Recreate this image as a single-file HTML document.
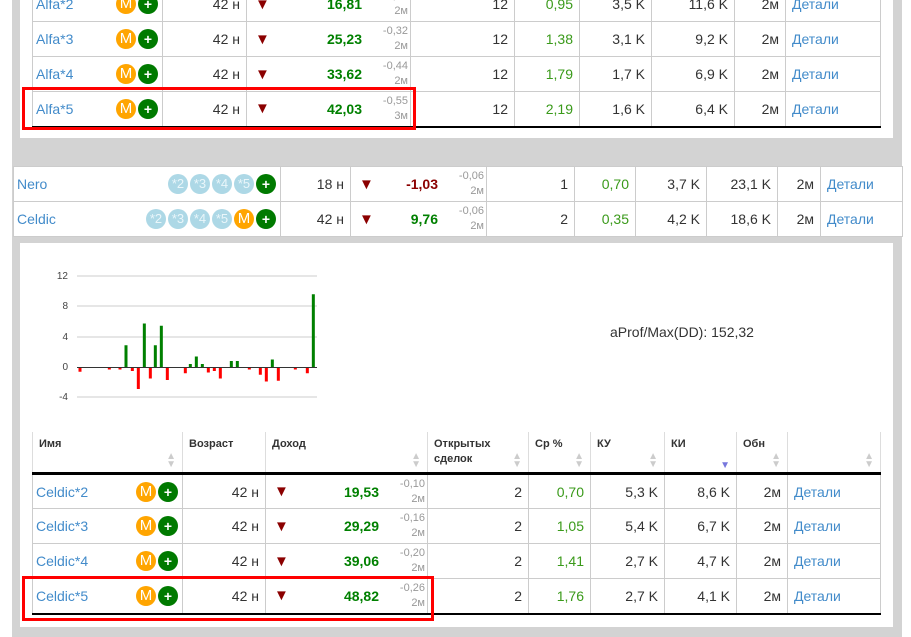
<!DOCTYPE html>
<html><head><meta charset="utf-8"><style>
*{box-sizing:border-box;margin:0;padding:0}
body{width:911px;height:637px;overflow:hidden;background:#fff;font-family:"Liberation Sans",sans-serif;font-size:14px;color:#333;position:relative}
.abs{position:absolute}
table{border-collapse:collapse;table-layout:fixed;position:absolute}
td{border:1px solid #ccc;height:35px;padding:0 6px;vertical-align:middle;white-space:nowrap;text-align:right}
a{color:#428bca;text-decoration:none}
.nm{text-align:left;padding-left:3px;padding-right:4px}
.nm a{float:left;line-height:20px}
.bd{float:right;display:flex;gap:2px}
.b{width:20px;height:20px;border-radius:50%;color:#fff;text-align:center;line-height:20px;font-size:14px}
.o{background:#ffa500;font-size:15px}
.g{background:#007a00;font-weight:bold}
.l{background:#add8e6;font-size:13px;color:#eaf6fa}
.inc{padding:0 2px 0 8px}
.inc>div{display:flex;align-items:center}
.tri{color:#8b0000;font-size:15px;width:20px;text-align:left}
.v{flex:1;text-align:right;font-weight:bold;color:#008000}
.s{width:46px;text-align:right;font-size:11px;color:#999;line-height:15px}
.cp{color:#3a9a1a}
.det{text-align:left}
th{font-size:11px;font-weight:bold;text-align:left;vertical-align:top;padding:5px 6px;border-left:1px solid #ddd;border-right:1px solid #ddd;height:41px;position:relative;line-height:15px;color:#333}
.ar{position:absolute;right:6px;bottom:3px;color:#ccc;font-size:10px;line-height:8px;text-align:center}
.red{position:absolute;border:3px solid #f00}
</style></head><body>
<div class="abs" style="left:12px;top:0;width:890px;height:637px;background:#d3d3d3"></div>
<div class="abs" style="left:20px;top:0;width:873px;height:138px;background:#fff"></div>
<div class="abs" style="left:20px;top:243px;width:873px;height:384px;background:#fff"></div>

<table style="left:32px;top:-14px;width:848px;border-bottom:2px solid #000">
<colgroup><col style="width:130px"><col style="width:84px"><col style="width:164px"><col style="width:104px"><col style="width:65px"><col style="width:72px"><col style="width:83px"><col style="width:51px"><col style="width:95px"></colgroup>
<tr><td class="nm"><a>Alfa*2</a><span class="bd"><span class="b o">M</span><span class="b g">+</span></span></td><td>42 н</td><td class="inc"><div><span class="tri">▼</span><span class="v">16,81</span><span class="s">-0,19<br>2м</span></div></td><td>12</td><td class="cp">0,95</td><td>3,5 K</td><td>11,6 K</td><td>2м</td><td class="det"><a>Детали</a></td></tr>
<tr><td class="nm"><a>Alfa*3</a><span class="bd"><span class="b o">M</span><span class="b g">+</span></span></td><td>42 н</td><td class="inc"><div><span class="tri">▼</span><span class="v">25,23</span><span class="s">-0,32<br>2м</span></div></td><td>12</td><td class="cp">1,38</td><td>3,1 K</td><td>9,2 K</td><td>2м</td><td class="det"><a>Детали</a></td></tr>
<tr><td class="nm"><a>Alfa*4</a><span class="bd"><span class="b o">M</span><span class="b g">+</span></span></td><td>42 н</td><td class="inc"><div><span class="tri">▼</span><span class="v">33,62</span><span class="s">-0,44<br>2м</span></div></td><td>12</td><td class="cp">1,79</td><td>1,7 K</td><td>6,9 K</td><td>2м</td><td class="det"><a>Детали</a></td></tr>
<tr><td class="nm"><a>Alfa*5</a><span class="bd"><span class="b o">M</span><span class="b g">+</span></span></td><td>42 н</td><td class="inc"><div><span class="tri">▼</span><span class="v">42,03</span><span class="s">-0,55<br>3м</span></div></td><td>12</td><td class="cp">2,19</td><td>1,6 K</td><td>6,4 K</td><td>2м</td><td class="det"><a>Детали</a></td></tr>
</table>
<div class="red" style="left:22px;top:87px;width:394px;height:43px"></div>

<table style="left:13px;top:166px;width:889px;background:#fff">
<colgroup><col style="width:267px"><col style="width:70px"><col style="width:136px"><col style="width:88px"><col style="width:61px"><col style="width:71px"><col style="width:71px"><col style="width:43px"><col style="width:82px"></colgroup>
<tr><td class="nm"><a>Nero</a><span class="bd"><span class="b l">*2</span><span class="b l">*3</span><span class="b l">*4</span><span class="b l">*5</span><span class="b g">+</span></span></td><td>18 н</td><td class="inc"><div><span class="tri">▼</span><span class="v" style="color:#8b0000">-1,03</span><span class="s">-0,06<br>2м</span></div></td><td>1</td><td class="cp">0,70</td><td>3,7 K</td><td>23,1 K</td><td>2м</td><td class="det"><a>Детали</a></td></tr>
<tr><td class="nm"><a>Celdic</a><span class="bd"><span class="b l">*2</span><span class="b l">*3</span><span class="b l">*4</span><span class="b l">*5</span><span class="b o">M</span><span class="b g">+</span></span></td><td>42 н</td><td class="inc"><div><span class="tri">▼</span><span class="v">9,76</span><span class="s">-0,06<br>2м</span></div></td><td>2</td><td class="cp">0,35</td><td>4,2 K</td><td>18,6 K</td><td>2м</td><td class="det"><a>Детали</a></td></tr>
</table>

<svg class="abs" style="left:30px;top:260px" width="300" height="150" font-family="Liberation Sans" font-size="10" fill="#444">
<g stroke="#ccc" stroke-width="1"><line x1="47" y1="16" x2="287" y2="16"/><line x1="47" y1="46" x2="287" y2="46"/><line x1="47" y1="77" x2="287" y2="77"/><line x1="47" y1="137" x2="287" y2="137"/></g>
<text x="38" y="19" text-anchor="end">12</text><text x="38" y="49" text-anchor="end">8</text><text x="38" y="80" text-anchor="end">4</text><text x="38" y="110" text-anchor="end">0</text><text x="38" y="140" text-anchor="end">-4</text>
<g id="bars"></g>
<line x1="47" y1="107.5" x2="287" y2="107.5" stroke="#333" stroke-width="1"/>
</svg>
<script>
var d=[[150,-0.5],[238,-0.2],[270,-0.2],[288,2.9],[307,-0.4],[325,-2.8],[343,5.8],[361,-1.4],[376,2.9],[394,5.5],[412,-1.6],[466,-0.7],[481,0.4],[499,1.4],[517,0.4],[535,-0.6],[553,-0.4],[571,-1.4],[604,0.8],[622,0.8],[658,-0.2],[691,-0.9],[709,-1.8],[727,1.0],[745,-1.7],[796,-0.2],[832,-0.7],[850,9.7]];
var s='';d.forEach(function(b){var x=b[0]/3-1.5,h=Math.abs(b[1])*7.5;if(b[1]>0)s+='<rect x="'+x+'" y="'+(107-h)+'" width="3" height="'+h+'" fill="#008000"/>';else s+='<rect x="'+x+'" y="108" width="3" height="'+h+'" fill="#f00"/>';});
document.getElementById('bars').innerHTML=s;
</script>
<div class="abs" style="left:610px;top:324px;font-size:14px">aProf/Max(DD): 152,32</div>

<table style="left:32px;top:432px;width:848px;border-bottom:2px solid #000">
<colgroup><col style="width:150px"><col style="width:83px"><col style="width:162px"><col style="width:101px"><col style="width:62px"><col style="width:74px"><col style="width:72px"><col style="width:51px"><col style="width:93px"></colgroup>
<tr style="border-bottom:3px solid #000"><th>Имя<span class="ar">▲<br>▼</span></th><th>Возраст</th><th>Доход<span class="ar">▲<br>▼</span></th><th>Открытых<br>сделок<span class="ar">▲<br>▼</span></th><th>Ср %<span class="ar">▲<br>▼</span></th><th>КУ<span class="ar">▲<br>▼</span></th><th>КИ<span class="ar" style="color:#7777dd;bottom:2px">▼</span></th><th>Обн<span class="ar">▲<br>▼</span></th><th><span class="ar">▲<br>▼</span></th></tr>
<tr><td class="nm"><a>Celdic*2</a><span class="bd"><span class="b o">M</span><span class="b g">+</span></span></td><td>42 н</td><td class="inc"><div><span class="tri">▼</span><span class="v">19,53</span><span class="s">-0,10<br>2м</span></div></td><td>2</td><td class="cp">0,70</td><td>5,3 K</td><td>8,6 K</td><td>2м</td><td class="det"><a>Детали</a></td></tr>
<tr><td class="nm"><a>Celdic*3</a><span class="bd"><span class="b o">M</span><span class="b g">+</span></span></td><td>42 н</td><td class="inc"><div><span class="tri">▼</span><span class="v">29,29</span><span class="s">-0,16<br>2м</span></div></td><td>2</td><td class="cp">1,05</td><td>5,4 K</td><td>6,7 K</td><td>2м</td><td class="det"><a>Детали</a></td></tr>
<tr><td class="nm"><a>Celdic*4</a><span class="bd"><span class="b o">M</span><span class="b g">+</span></span></td><td>42 н</td><td class="inc"><div><span class="tri">▼</span><span class="v">39,06</span><span class="s">-0,20<br>2м</span></div></td><td>2</td><td class="cp">1,41</td><td>2,7 K</td><td>4,7 K</td><td>2м</td><td class="det"><a>Детали</a></td></tr>
<tr><td class="nm"><a>Celdic*5</a><span class="bd"><span class="b o">M</span><span class="b g">+</span></span></td><td>42 н</td><td class="inc"><div><span class="tri">▼</span><span class="v">48,82</span><span class="s">-0,26<br>2м</span></div></td><td>2</td><td class="cp">1,76</td><td>2,7 K</td><td>4,1 K</td><td>2м</td><td class="det"><a>Детали</a></td></tr>
</table>
<div class="red" style="left:22px;top:576px;width:412px;height:45px"></div>
</body></html>
